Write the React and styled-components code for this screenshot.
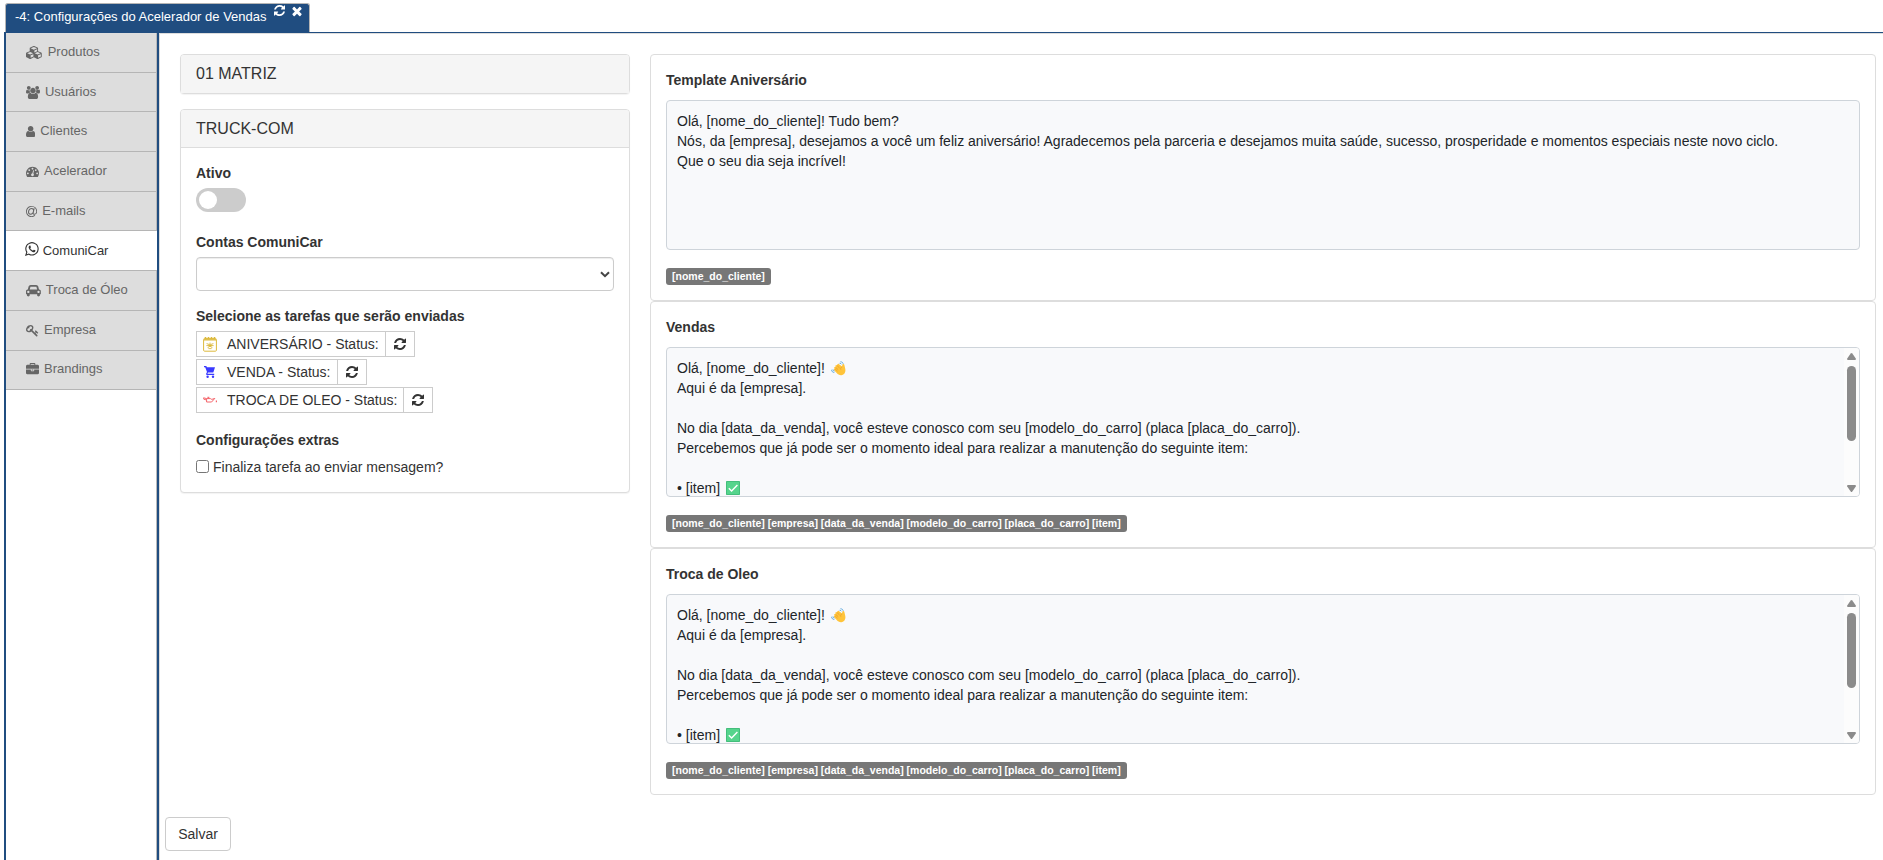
import React, { useState } from 'react';
import styled, { createGlobalStyle } from 'styled-components';

const GlobalStyle = createGlobalStyle`
  * {
    box-sizing: border-box;
  }
  body {
    margin: 0;
    background: #fff;
    color: #333;
    font-family: 'Liberation Sans', Arial, sans-serif;
    font-size: 14px;
    line-height: 20px;
    overflow: hidden;
  }
`;

const Page = styled.div`
  height: 100vh;
  display: flex;
  flex-direction: column;
  padding: 3px 0 0 4px;
`;

const TabBar = styled.div`
  display: flex;
  height: 29px;
  padding-left: 1px;
`;

const Tab = styled.div`
  display: flex;
  width: 305px;
  padding: 0 7px 0 9px;
  background: #204d80;
  border: 1px solid #b5b5b5;
  border-bottom: none;
  border-radius: 3px 3px 0 0;
  color: #fff;
  font-size: 13px;
`;

const TabTitle = styled.span`
  flex: 1;
  line-height: 26px;
  white-space: nowrap;
`;

const TabIcons = styled.span`
  display: flex;
  gap: 7px;
`;

const Glyph = styled.svg`
  display: block;
  flex: none;
  height: ${(p) => p.$size}px;
  fill: currentColor;
`;

const Workspace = styled.div`
  flex: 1;
  display: flex;
  border-top: 1px solid #204d80;
  border-left: 2px solid #204d80;
`;

const Sidebar = styled.nav`
  width: 151px;
  border-right: 1px solid #b9b9b9;
`;

const MenuItem = styled.a`
  display: flex;
  align-items: center;
  gap: ${(p) => (p.$active ? 4 : 5)}px;
  height: 39.7px;
  padding: 0 0 0 ${(p) => (p.$active ? 19 : 20)}px;
  background: ${(p) => (p.$active ? '#fff' : '#ddd')};
  border-bottom: 1px solid #b5b5b5;
  margin-right: ${(p) => (p.$active ? -1 : 0)}px;
  color: ${(p) => (p.$active ? '#333' : '#666')};
  font-size: 13px;
  cursor: pointer;

  ${Glyph} {
    margin-bottom: ${(p) => (p.$active ? 4 : 0)}px;
  }
`;

const MenuText = styled.span`
  padding-top: ${(p) => (p.$active ? 1 : 0)}px;
  margin-top: -1px;
`;

const Main = styled.main`
  flex: 1;
  border-left: 2px solid #204d80;
  box-shadow: inset 1px 0 0 #ddd, inset 0 1px 0 #ddd;
  padding: 21px 7px 0 21px;
`;

const Columns = styled.div`
  display: grid;
  grid-template-columns: 450px 1226px;
  gap: 20px;
  align-items: start;
`;

const Panel = styled.section`
  background: #fff;
  border: 1px solid #ddd;
  border-radius: 4px;
  box-shadow: 0 1px 1px rgba(0, 0, 0, 0.05);
  margin-bottom: 15px;
`;

const PanelHeading = styled.h4`
  height: 38px;
  margin: 0;
  padding: 9px 15px;
  background: #f5f5f5;
  border-bottom: ${(p) => (p.$open ? '1px solid #ddd' : 'none')};
  border-radius: 3px 3px 0 0;
  font-size: 16px;
  font-weight: 400;
`;

const PanelBody = styled.div`
  height: 344px;
  padding: 15px;
`;

const FieldLabel = styled.div`
  font-weight: 700;
  margin-top: ${(p) => p.$top || 0}px;
  margin-bottom: 5px;
`;

const Toggle = styled.button`
  display: block;
  width: 50px;
  height: 24px;
  padding: 3px;
  border: 0;
  border-radius: 12px;
  background: ${(p) => (p.$on ? '#204d80' : '#ccc')};
  cursor: pointer;
`;

const Knob = styled.span`
  display: block;
  width: 18px;
  height: 18px;
  margin-left: ${(p) => (p.$on ? 26 : 0)}px;
  border-radius: 50%;
  background: #fff;
`;

const Select = styled.div`
  display: flex;
  align-items: center;
  justify-content: flex-end;
  height: 34px;
  padding-right: 3px;
  border: 1px solid #ccc;
  border-radius: 4px;
  box-shadow: inset 0 1px 1px rgba(0, 0, 0, 0.075);
`;

const TaskList = styled.div`
  display: flex;
  flex-direction: column;
  align-items: flex-start;
  gap: 2px;
`;

const TaskRow = styled.div`
  display: flex;
  height: 26px;
  border: 1px solid #ccc;
`;

const TaskName = styled.span`
  display: flex;
  align-items: center;
  gap: 10px;
  padding: 0 6px;
  white-space: nowrap;
`;

const TaskRefresh = styled.button`
  display: flex;
  align-items: center;
  justify-content: center;
  width: 29px;
  padding: 0;
  border: 0;
  border-left: 1px solid #ccc;
  background: #fff;
  color: #333;
  cursor: pointer;
`;

const CheckRow = styled.label`
  display: flex;
  align-items: center;
  gap: 4px;
  margin-top: 7px;
`;

const Checkbox = styled.input`
  width: 13px;
  height: 13px;
  margin: 0 0 2px;
`;

const TemplateCard = styled.section`
  height: 247px;
  padding: 15px 15px 0;
  border: 1px solid #ddd;
  border-radius: 4px;
`;

const TemplateTitle = styled.div`
  font-weight: 700;
  margin-bottom: 10px;
`;

const TemplateBox = styled.div`
  display: flex;
  height: 150px;
  overflow: hidden;
  background: #f8f9fb;
  border: 1px solid #ced4da;
  border-radius: 4px;
  color: #212529;
`;

const TemplateText = styled.div`
  flex: 1;
  padding: 10px;
`;

const Line = styled.div`
  display: flex;
  align-items: center;
  gap: 6px;
  height: 20px;
  white-space: pre;
`;

const ScrollTrack = styled.div`
  display: flex;
  flex-direction: column;
  align-items: center;
  width: 15px;
  padding: 5px 0 4px;
  background: #fcfcfc;
`;

const ScrollThumb = styled.div`
  width: 9px;
  height: 75px;
  margin: 6px 0 auto;
  border-radius: 5px;
  background: #8b8b8b;
`;

const Tag = styled.span`
  display: inline-block;
  height: 17px;
  margin-top: 18px;
  padding: 0 6px;
  border-radius: 3px;
  background: #777;
  color: #fff;
  font-size: 10.5px;
  font-weight: 700;
  line-height: 17px;
  white-space: nowrap;
`;

const SaveButton = styled.button`
  display: block;
  width: 66px;
  height: 34px;
  margin: 22px 0 0 -15px;
  padding: 0;
  background: #fff;
  border: 1px solid #ccc;
  border-radius: 4px;
  color: #333;
  font: inherit;
  cursor: pointer;
`;

const icons = {
  cubes: {
    box: '0 0 2304 1792',
    d: 'M640 1632l384-192v-314l-384 164v342zm-64-454l404-173-404-173-404 173zm1088 454l384-192v-314l-384 164v342zm-64-454l404-173-404-173-404 173zm-448-293l384-165v-266l-384 164v267zm-64-379l441-189-441-189-441 189zm1088 518v416q0 36-19 67t-52 47l-448 224q-25 14-57 14t-57-14l-448-224q-4-2-7-4-2 2-7 4l-448 224q-25 14-57 14t-57-14l-448-224q-33-16-52-47t-19-67v-416q0-38 21.5-70t56.5-48l434-186v-400q0-38 21.5-70t56.5-48l448-192q23-10 50-10t50 10l448 192q35 16 56.5 48t21.5 70v400l434 186q36 16 57 48t21 70z',
  },
  users: {
    box: '0 0 1920 1792',
    d: 'M593 896q-162 5-265 128h-134q-82 0-138-40.5t-56-118.5q0-353 124-353 6 0 43.5 21t97.5 42.5 119 21.5q67 0 133-23-5 37-5 66 0 159 93 287zm1071 637q0 120-73 189.5t-194 69.5h-874q-121 0-194-69.5t-73-189.5q0-53 3.5-103.5t14-109 26.5-108.5 43-97.5 62-81 85.5-53.5 111.5-20q10 0 43 21.5t73 48 107 48 135 21.5 135-21.5 107-48 73-48 43-21.5q61 0 111.5 20t85.5 53.5 62 81 43 97.5 26.5 108.5 14 109 3.5 103.5zm-1024-1277q0 106-75 181t-181 75-181-75-75-181 75-181 181-75 181 75 75 181zm704 384q0 159-112.5 271.5t-271.5 112.5-271.5-112.5-112.5-271.5 112.5-271.5 271.5-112.5 271.5 112.5 112.5 271.5zm576 225q0 78-56 118.5t-138 40.5h-134q-103-123-265-128 93-128 93-287 0-29-5-66 66 23 133 23 59 0 119-21.5t97.5-42.5 43.5-21q124 0 124 353zm-128-609q0 106-75 181t-181 75-181-75-75-181 75-181 181-75 181 75 75 181z',
  },
  user: {
    box: '256 0 1280 1792',
    d: 'M1536 1399q0 109-62.5 187t-150.5 78h-854q-88 0-150.5-78t-62.5-187q0-85 8.5-160.5t31.5-152 58.5-131 94-89 134.5-34.5q131 128 313 128t313-128q76 0 134.5 34.5t94 89 58.5 131 31.5 152 8.5 160.5zm-256-887q0 159-112.5 271.5t-271.5 112.5-271.5-112.5-112.5-271.5 112.5-271.5 271.5-112.5 271.5 112.5 112.5 271.5z',
  },
  gauge: {
    box: '0 0 1792 1792',
    d: 'M384 1152q0-53-37.5-90.5t-90.5-37.5-90.5 37.5-37.5 90.5 37.5 90.5 90.5 37.5 90.5-37.5 37.5-90.5zm192-448q0-53-37.5-90.5t-90.5-37.5-90.5 37.5-37.5 90.5 37.5 90.5 90.5 37.5 90.5-37.5 37.5-90.5zm428 481l101-382q6-26-7.5-48.5t-38.5-29.5-48 6.5-30 39.5l-101 382q-60 5-107 43.5t-63 98.5q-20 77 20 146t117 89 146-20 89-117q16-60-6-117t-72-91zm660-33q0-53-37.5-90.5t-90.5-37.5-90.5 37.5-37.5 90.5 37.5 90.5 90.5 37.5 90.5-37.5 37.5-90.5zm-640-640q0-53-37.5-90.5t-90.5-37.5-90.5 37.5-37.5 90.5 37.5 90.5 90.5 37.5 90.5-37.5 37.5-90.5zm448 192q0-53-37.5-90.5t-90.5-37.5-90.5 37.5-37.5 90.5 37.5 90.5 90.5 37.5 90.5-37.5 37.5-90.5zm320 448q0 261-141 483-19 29-54 29h-1402q-35 0-54-29-141-221-141-483 0-182 71-348t191-286 286-191 348-71 348 71 286 191 191 286 71 348z',
  },
  at: {
    box: '0 0 1536 1792',
    d: 'M972 775q0-108-53.5-169t-147.5-61q-63 0-124 30.5t-110 84.5-79.5 137-30.5 180q0 112 53.5 173t150.5 61q96 0 176-66.5t122.5-166 42.5-203.5zm564 121q0 111-37 197t-98.5 135-131.5 74.5-145 27.5q-6 .5-15.5.5t-16.5.5q-95 0-142-53-28-33-33-83-52 66-131.5 110t-173.5 44q-161 0-249.5-95.5t-88.5-269.5q0-157 66-290t179-210.5 246-77.5q87 0 155 35.5t106 99.5l2-19 11-56q1-6 5.5-12t9.5-6h118q5 0 13 11 5 5 3 16l-120 614q-5 24-5 48 0 39 12.5 52t44.5 13q28-1 57-5.5t73-24 77-50 57-89.5 24-137q0-292-174-466t-466-174q-130 0-248.5 51t-204 136.5-136.5 204-51 248.5 51 248.5 136.5 204 204 136.5 248.5 51q228 0 405-144 11-9 24-8t21 12l41 49q8 12 7 24-2 13-12 22-102 83-227.5 128t-258.5 45q-156 0-298-61t-245-164-164-245-61-298 61-298 164-245 245-164 298-61q344 0 556 212t212 556z',
  },
  whatsapp: {
    box: '128 0 1536 1792',
    d: 'M1113 974q13 0 97.5 44t89.5 53q2 5 2 15 0 33-17 76-16 39-71 65.5t-102 26.5q-57 0-190-62-98-45-170-118t-148-185q-72-107-71-194v-8q3-91 74-158 24-22 52-22 6 0 18 1.5t19 1.5q19 0 26.5 6.5t15.5 27.5q8 20 33 88t25 75q0 21-34.5 57.5t-34.5 46.5q0 7 5 15 34 73 102 137 56 53 151 101 12 7 22 7 15 0 54-48.5t52-48.5zm-203 530q127 0 243.5-50t200.5-134 134-200.5 50-243.5-50-243.5-134-200.5-200.5-134-243.5-50-243.5 50-200.5 134-134 200.5-50 243.5q0 203 120 368l-79 233 242-77q158 104 345 104zm0-1382q153 0 292.5 60t240.5 161 161 240.5 60 292.5-60 292.5-161 240.5-240.5 161-292.5 60q-195 0-365-94l-417 134 136-405q-108-178-108-389 0-153 60-292.5t161-240.5 240.5-161 292.5-60z',
  },
  car: {
    box: '0 0 2048 1792',
    d: 'M480 1088q0-66-47-113t-113-47-113 47-47 113 47 113 113 47 113-47 47-113zm36-320h1016l-89-357q-2-8-14-17.5t-21-9.5h-768q-9 0-21 9.5t-14 17.5zm1372 320q0-66-47-113t-113-47-113 47-47 113 47 113 113 47 113-47 47-113zm160-96v384q0 14-9 23t-23 9h-96v128q0 80-56 136t-136 56-136-56-56-136v-128h-1024v128q0 80-56 136t-136 56-136-56-56-136v-128h-96q-14 0-23-9t-9-23v-384q0-93 65.5-158.5t158.5-65.5h28l105-419q23-94 104-157.5t179-63.5h768q98 0 179 63.5t104 157.5l105 419h28q93 0 158.5 65.5t65.5 158.5z',
  },
  key: {
    box: '0 0 1792 1792',
    d: 'M832 512q0-80-56-136t-136-56-136 56-56 136q0 42 19 83-41-19-83-19-80 0-136 56t-56 136 56 136 136 56 136-56 56-136q0-42-19-83 41 19 83 19 80 0 136-56t56-136zm851 704q0 17-49 66t-66 49q-9 0-28.5-16t-36.5-33-38.5-40-24.5-26l-96 96 220 220q28 28 28 68 0 42-39 81t-81 39q-40 0-68-28l-671-671q-176 131-365 131-163 0-265.5-102.5t-102.5-265.5q0-160 95-313t248-248 313-95q163 0 265.5 102.5t102.5 265.5q0 189-131 365l355 355 96-96q-3-3-26-24.5t-40-38.5-33-36.5-16-28.5q0-17 49-66t66-49q13 0 23 10 6 6 46 44.5t82 79.5 86.5 86 73 78 28.5 41z',
  },
  briefcase: {
    box: '0 0 1792 1792',
    d: 'M640 256h512v-128h-512v128zm1152 640v480q0 66-47 113t-113 47h-1472q-66 0-113-47t-47-113v-480h672v160q0 26 19 45t45 19h320q26 0 45-19t19-45v-160h672zm-768 0v128h-256v-128h256zm768-480v384h-1792v-384q0-66 47-113t113-47h352v-160q0-40 28-68t68-28h576q40 0 68 28t28 68v160h352q66 0 113 47t47 113z',
  },
  refresh: {
    box: '128 0 1536 1792',
    d: 'M1639 1056q0 5-1 7-64 268-268 434.5t-478 166.5q-146 0-282.5-55t-243.5-157l-129 129q-19 19-45 19t-45-19-19-45v-448q0-26 19-45t45-19h448q26 0 45 19t19 45-19 45l-137 137q71 66 161 102t187 36q134 0 250-65t186-179q11-17 53-117 8-23 30-23h192q13 0 22.5 9.5t9.5 22.5zm25-800v448q0 26-19 45t-45 19h-448q-26 0-45-19t-19-45 19-45l138-138q-148-137-349-137-134 0-250 65t-186 179q-11 17-53 117-8 23-30 23h-199q-13 0-22.5-9.5t-9.5-22.5v-7q65-268 270-434.5t480-166.5q146 0 284 55.5t245 156.5l130-129q19-19 45-19t45 19 19 45z',
  },
  close: {
    box: '256 0 1280 1792',
    d: 'M1490 1322q0 40-28 68l-136 136q-28 28-68 28t-68-28l-294-294-294 294q-28 28-68 28t-68-28l-136-136q-28-28-28-68t28-68l294-294-294-294q-28-28-28-68t28-68l136-136q28-28 68-28t68 28l294 294 294-294q28-28 68-28t68 28l136 136q28 28 28 68t-28 68l-294 294 294 294q28 28 28 68z',
  },
};

const Icon = ({ name, size = 13 }) => (
  <Glyph viewBox={icons[name].box} $size={size}>
    <path d={icons[name].d} />
  </Glyph>
);

const CalendarIcon = () => (
  <svg width="14" height="16" viewBox="0 0 14 16" fill="none" stroke="#dcb93c">
    <rect x="0.6" y="2.6" width="12.8" height="12.6" rx="1" />
    <path d="M1 3.8h12" strokeWidth="1.4" />
    <path d="M2.5 1v2M5.5 1v2M8.5 1v2M11.5 1v2" strokeWidth="1.6" />
    <path d="M3.6 7.6l2.4.8M10.4 7.6L8 8.4M3.4 9.6h7.2M4.6 11.6l1.6-.8M9.4 11.6l-1.6-.8M7 6.6v1.6M5.4 12.6h3.2" strokeWidth="0.9" />
    <circle cx="7" cy="9.5" r="1.5" fill="#dcb93c" stroke="none" />
  </svg>
);

const CartIcon = () => (
  <svg width="14" height="14" viewBox="0 0 14 14" fill="#3a3aff">
    <path d="M1 1h2.3l.6 1.2H12L10.3 7.6H5l-.6 1.2h6.8V10H3.6L3 9l1-2L2.2 2.2H1z" />
    <circle cx="4.6" cy="11.7" r="1.2" />
    <circle cx="10" cy="11.7" r="1.2" />
  </svg>
);

const OilIcon = () => (
  <svg width="14" height="8" viewBox="0 0 14 8" fill="none" stroke="#f4656b" strokeWidth="1">
    <path d="M3.6 4L.8 3.2.6 1.8l3 .8M3.6 2.6V6h5l3.2-3.6M11.8 2.4L8.8 3.4 7.4 2.6H3.6M5.4 2.6V1.4M4.4 1.3h2" />
    <path d="M13.4 4.6v1.6" strokeWidth="1.2" />
  </svg>
);

const WaveEmoji = () => (
  <svg width="15" height="15" viewBox="0 0 15 15">
    <path
      d="M3.2 6.4c.5-.6 1-.5 1.4-.1L4.4 5c.1-.9 1-1.2 1.6-.6l.3-1c.4-.8 1.3-.8 1.8-.2l3 2.2.2-1.6c.2-1.2 1.8-1.2 2 0l1 4.2c.6 3.2-1 6-4 6.2-2 .1-3.4-.8-4.6-2.2L3.300 9.400c-.6-.8-.3-1.500.4-1.700-.6-.4-.8-.9-.5-1.300z"
      fill="#ffc43a"
    />
    <path d="M4.6 6.4l2.6 2.3M6 4.500l2.600 2.500M4.200 8l2.300 2.200M11.200 5.800c-1.500.6-1.800 1.700-1.400 2.900" fill="none" stroke="#e59a2c" strokeWidth=".7" />
    <path d="M9.4.8c1.700 0 2.600.8 2.800 2M.6 8.800c.2 1.800 1 2.500 2.700 2.700M8.600 2.300c1 0 1.700.4 1.900 1M2 8.400c.1 1 .6 1.500 1.500 1.700" fill="none" stroke="#5fa9de" strokeWidth="1" />
  </svg>
);

const CheckEmoji = () => (
  <svg width="14" height="14" viewBox="0 0 14 14">
    <rect width="14" height="14" rx="0.8" fill="#3fb877" />
    <rect x="0.8" y="0.8" width="12.4" height="12.4" fill="#55d48c" />
    <path d="M2.8 7.3l2.8 2.8 5.8-6" fill="none" stroke="#fff" strokeWidth="1.4" />
  </svg>
);

const menu = [
  { icon: 'cubes', label: 'Produtos' },
  { icon: 'users', label: 'Usuários' },
  { icon: 'user', label: 'Clientes' },
  { icon: 'gauge', label: 'Acelerador' },
  { icon: 'at', label: 'E-mails' },
  { icon: 'whatsapp', label: 'ComuniCar', size: 16 },
  { icon: 'car', label: 'Troca de Óleo' },
  { icon: 'key', label: 'Empresa' },
  { icon: 'briefcase', label: 'Brandings' },
];

const tasks = [
  { name: 'ANIVERSÁRIO', icon: <CalendarIcon /> },
  { name: 'VENDA', icon: <CartIcon /> },
  { name: 'TROCA DE OLEO', icon: <OilIcon /> },
];

const serviceLines = [
  { text: 'Olá, [nome_do_cliente]!', emoji: <WaveEmoji /> },
  { text: 'Aqui é da [empresa].' },
  { text: '' },
  { text: 'No dia [data_da_venda], você esteve conosco com seu [modelo_do_carro] (placa [placa_do_carro]).' },
  { text: 'Percebemos que já pode ser o momento ideal para realizar a manutenção do seguinte item:' },
  { text: '' },
  { text: '• [item]', emoji: <CheckEmoji /> },
];

const serviceTags = '[nome_do_cliente] [empresa] [data_da_venda] [modelo_do_carro] [placa_do_carro] [item]';

const templates = [
  {
    title: 'Template Aniversário',
    tags: '[nome_do_cliente]',
    lines: [
      { text: 'Olá, [nome_do_cliente]! Tudo bem?' },
      {
        text: 'Nós, da [empresa], desejamos a você um feliz aniversário! Agradecemos pela parceria e desejamos muita saúde, sucesso, prosperidade e momentos especiais neste novo ciclo.',
      },
      { text: 'Que o seu dia seja incrível!' },
    ],
  },
  { title: 'Vendas', tags: serviceTags, lines: serviceLines, scroll: true },
  { title: 'Troca de Oleo', tags: serviceTags, lines: serviceLines, scroll: true },
];

const Scrollbar = () => (
  <ScrollTrack>
    <svg width="9" height="7" viewBox="0 0 9 7" fill="#8b8b8b">
      <path d="M3.7.6Q4.5-.4 5.3.6L8.8 5.6Q9.2 7 8 7H1Q-.2 7 .2 5.6z" />
    </svg>
    <ScrollThumb />
    <svg width="9" height="7" viewBox="0 0 9 7" fill="#8b8b8b">
      <path d="M3.7 6.4Q4.5 7.4 5.3 6.4L8.8 1.4Q9.2 0 8 0H1Q-.2 0 .2 1.4z" />
    </svg>
  </ScrollTrack>
);

export default function App() {
  const [active, setActive] = useState('ComuniCar');
  const [enabled, setEnabled] = useState(false);

  return (
    <Page>
      <GlobalStyle />
      <TabBar>
        <Tab>
          <TabTitle>-4: Configurações do Acelerador de Vendas</TabTitle>
          <TabIcons>
            <Icon name="refresh" />
            <Icon name="close" size={14} />
          </TabIcons>
        </Tab>
      </TabBar>
      <Workspace>
        <Sidebar>
          {menu.map((item) => (
            <MenuItem key={item.label} $active={active === item.label} onClick={() => setActive(item.label)}>
              <Icon name={item.icon} size={item.size} />
              <MenuText $active={active === item.label}>{item.label}</MenuText>
            </MenuItem>
          ))}
        </Sidebar>
        <Main>
          <Columns>
            <div>
              <Panel>
                <PanelHeading>01 MATRIZ</PanelHeading>
              </Panel>
              <Panel>
                <PanelHeading $open>TRUCK-COM</PanelHeading>
                <PanelBody>
                  <FieldLabel>Ativo</FieldLabel>
                  <Toggle $on={enabled} onClick={() => setEnabled(!enabled)}>
                    <Knob $on={enabled} />
                  </Toggle>
                  <FieldLabel $top={20}>Contas ComuniCar</FieldLabel>
                  <Select>
                    <svg width="10" height="7" viewBox="0 0 10 7" fill="none" stroke="#444" strokeWidth="2">
                      <path d="M1 1.2l4 4 4-4" />
                    </svg>
                  </Select>
                  <FieldLabel $top={15}>Selecione as tarefas que serão enviadas</FieldLabel>
                  <TaskList>
                    {tasks.map((task) => (
                      <TaskRow key={task.name}>
                        <TaskName>
                          {task.icon}
                          {task.name} - Status:
                        </TaskName>
                        <TaskRefresh>
                          <Icon name="refresh" size={14} />
                        </TaskRefresh>
                      </TaskRow>
                    ))}
                  </TaskList>
                  <FieldLabel $top={17}>Configurações extras</FieldLabel>
                  <CheckRow>
                    <Checkbox type="checkbox" />
                    Finaliza tarefa ao enviar mensagem?
                  </CheckRow>
                </PanelBody>
              </Panel>
            </div>
            <div>
              {templates.map((tpl) => (
                <TemplateCard key={tpl.title}>
                  <TemplateTitle>{tpl.title}</TemplateTitle>
                  <TemplateBox>
                    <TemplateText>
                      {tpl.lines.map((line, i) => (
                        <Line key={i}>
                          {line.text}
                          {line.emoji}
                        </Line>
                      ))}
                    </TemplateText>
                    {tpl.scroll && <Scrollbar />}
                  </TemplateBox>
                  <Tag>{tpl.tags}</Tag>
                </TemplateCard>
              ))}
            </div>
          </Columns>
          <SaveButton>Salvar</SaveButton>
        </Main>
      </Workspace>
    </Page>
  );
}
